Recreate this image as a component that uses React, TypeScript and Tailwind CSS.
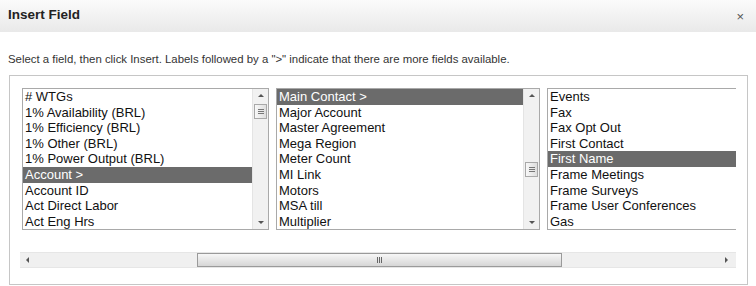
import React from "react";

const list1 = ["# WTGs", "1% Availability (BRL)", "1% Efficiency (BRL)", "1% Other (BRL)", "1% Power Output (BRL)", "Account >", "Account ID", "Act Direct Labor", "Act Eng Hrs"];
const list2 = ["Main Contact >", "Major Account", "Master Agreement", "Mega Region", "Meter Count", "MI Link", "Motors", "MSA till", "Multiplier"];
const list3 = ["Events", "Fax", "Fax Opt Out", "First Contact", "First Name", "Frame Meetings", "Frame Surveys", "Frame User Conferences", "Gas"];

function VScroll({ thumbTop }: { thumbTop: number }) {
  return (
    <div className="relative w-[16px] h-full bg-[#f1f1f1] border-l border-[#e4e4e4] shrink-0">
      <div className="absolute top-[5px] left-[5px] w-0 h-0 border-l-[3px] border-r-[3px] border-b-[3px] border-l-transparent border-r-transparent border-b-[#555]" />
      <div className="absolute bottom-[5px] left-[5px] w-0 h-0 border-l-[3px] border-r-[3px] border-t-[3px] border-l-transparent border-r-transparent border-t-[#555]" />
      <div
        className="absolute left-[1px] w-[13px] h-[15px] border border-[#a8a8a8] bg-gradient-to-r from-[#f8f8f8] to-[#dedede] flex flex-col items-center justify-center gap-[1px]"
        style={{ top: thumbTop }}
      >
        <div className="w-[6px] h-px bg-[#777]" />
        <div className="w-[6px] h-px bg-[#777]" />
        <div className="w-[6px] h-px bg-[#777]" />
      </div>
    </div>
  );
}

function ListBox({ items, sel, width, thumbTop, scroll = true }: { items: string[]; sel: number; width: number; thumbTop: number; scroll?: boolean }) {
  return (
    <div className="flex h-[142px] border border-[#a9a9a9] bg-white shrink-0" style={{ width }}>
      <div className="flex-1 flex flex-col py-0">
        {items.map((t, i) => (
          <div
            key={t}
            className={
              "h-[15.6px] leading-[15.6px] pl-[2px] whitespace-nowrap text-[13px] " +
              (i === sel ? "bg-[#6b6b6b] text-white" : "text-[#111]")
            }
          >
            {t}
          </div>
        ))}
      </div>
      {scroll && <VScroll thumbTop={thumbTop} />}
    </div>
  );
}

export default function App() {
  return (
    <div className="w-[756px] h-[286px] bg-white overflow-hidden" style={{ fontFamily: '"Liberation Sans", Arial, sans-serif' }}>
      <div className="h-[32px] bg-gradient-to-b from-[#fbfbfb] to-[#e9e9e9] flex items-center justify-between pl-[8px] pr-[12px]">
        <div className="text-[13.5px] font-bold text-[#222] -mt-[1px]">Insert Field</div>
        <div className="text-[13px] text-[#555] leading-none">×</div>
      </div>
      <div className="pt-[21px] pl-[8px] text-[11.4px] text-[#333] leading-[13px] whitespace-nowrap">
        Select a field, then click Insert. Labels followed by a "&gt;" indicate that there are more fields available.
      </div>
      <div className="mt-[9px] ml-[9px] w-[739px] h-[210px] border border-[#c6c6c6] flex flex-col">
        <div className="mt-[12px] ml-[12px] w-[714px] overflow-hidden flex gap-[7px]">
          <ListBox items={list1} sel={5} width={247} thumbTop={15} />
          <ListBox items={list2} sel={0} width={264} thumbTop={73} />
          <ListBox items={list3} sel={4} width={264} thumbTop={73} />
        </div>
        <div className="relative mt-[22px] ml-[10px] w-[716px] h-[16px] bg-[#f0f0f0] border-y border-[#e6e6e6]">
          <div className="absolute left-[6px] top-[4px] w-0 h-0 border-t-[3px] border-b-[3px] border-r-[3px] border-t-transparent border-b-transparent border-r-[#555]" />
          <div className="absolute right-[8px] top-[4px] w-0 h-0 border-t-[3px] border-b-[3px] border-l-[3px] border-t-transparent border-b-transparent border-l-[#555]" />
          <div className="absolute left-[177px] top-[0px] w-[365px] h-[14px] border border-[#9a9a9a] bg-gradient-to-b from-[#f7f7f7] to-[#d6d6d6] flex items-center justify-center gap-[1px]">
            <div className="w-px h-[6px] bg-[#666]" />
            <div className="w-px h-[6px] bg-[#666]" />
            <div className="w-px h-[6px] bg-[#666]" />
          </div>
        </div>
      </div>
    </div>
  );
}
